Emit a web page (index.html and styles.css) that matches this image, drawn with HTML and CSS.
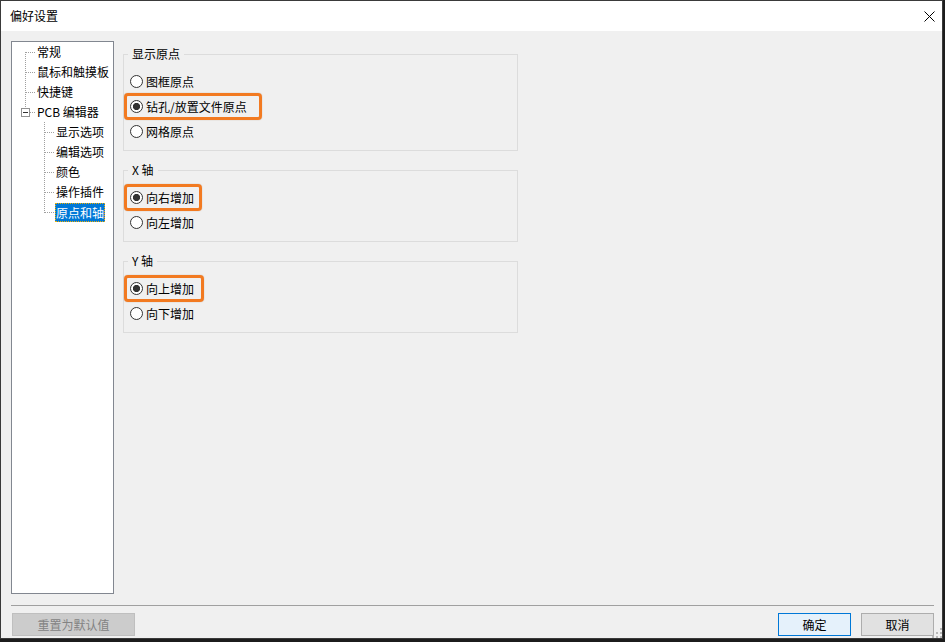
FILE: index.html
```html
<!DOCTYPE html>
<html lang="zh-CN">
<head>
<meta charset="utf-8">
<title>偏好设置</title>
<link rel="stylesheet" href="styles.css">
</head>
<body>
<div class="window">
  <div class="titlebar">
    <span class="title">偏好设置</span>
    <svg class="close" width="11" height="11" viewBox="0 0 11 11"><path d="M0.5 0.5 L10.5 10.5 M10.5 0.5 L0.5 10.5" stroke="#000" stroke-width="1" fill="none"/></svg>
  </div>
  <div class="client">
    <div class="main">
      <div class="tree">
        <svg class="tree-lines" width="100" height="200" viewBox="0 0 100 200">
          <g stroke="#a0a0a0" stroke-width="1" stroke-dasharray="1 1" fill="none">
            <line x1="13.5" y1="10" x2="13.5" y2="66"/>
            <line x1="14" y1="10.5" x2="23" y2="10.5"/>
            <line x1="14" y1="30.5" x2="23" y2="30.5"/>
            <line x1="14" y1="50.5" x2="23" y2="50.5"/>
            <line x1="18" y1="70.5" x2="23" y2="70.5"/>
            <line x1="32.5" y1="80" x2="32.5" y2="171"/>
            <line x1="33" y1="90.5" x2="42" y2="90.5"/>
            <line x1="33" y1="110.5" x2="42" y2="110.5"/>
            <line x1="33" y1="130.5" x2="42" y2="130.5"/>
            <line x1="33" y1="150.5" x2="42" y2="150.5"/>
            <line x1="33" y1="170.5" x2="42" y2="170.5"/>
          </g>
          <rect x="9.5" y="66.5" width="8" height="8" fill="#fff" stroke="#919191"/>
          <line x1="11" y1="70.5" x2="16" y2="70.5" stroke="#333" stroke-width="1"/>
        </svg>
        <div class="node root">常规</div>
        <div class="node root">鼠标和触摸板</div>
        <div class="node root">快捷键</div>
        <div class="node root">PCB 编辑器</div>
        <div class="node child">显示选项</div>
        <div class="node child">编辑选项</div>
        <div class="node child">颜色</div>
        <div class="node child">操作插件</div>
        <div class="node child"><span class="selected">原点和轴</span></div>
      </div>
      <div class="panel">
        <fieldset class="group">
          <legend>显示原点</legend>
          <div class="opt"><span class="radio"></span><span>图框原点</span></div>
          <div class="opt"><span class="hl hl-origin"><span class="radio checked"></span><span>钻孔/放置文件原点</span></span></div>
          <div class="opt"><span class="radio"></span><span>网格原点</span></div>
        </fieldset>
        <fieldset class="group">
          <legend>X 轴</legend>
          <div class="opt"><span class="hl hl-x"><span class="radio checked"></span><span>向右增加</span></span></div>
          <div class="opt"><span class="radio"></span><span>向左增加</span></div>
        </fieldset>
        <fieldset class="group">
          <legend>Y 轴</legend>
          <div class="opt"><span class="hl hl-y"><span class="radio checked"></span><span>向上增加</span></span></div>
          <div class="opt"><span class="radio"></span><span>向下增加</span></div>
        </fieldset>
      </div>
    </div>
    <div class="separator"></div>
    <div class="buttons">
      <button class="btn btn-disabled" disabled>重置为默认值</button>
      <div class="spacer"></div>
      <button class="btn btn-default">确定</button>
      <button class="btn">取消</button>
    </div>
    <svg class="grip" width="10" height="10" viewBox="0 0 10 10">
      <g fill="#b8b8b8">
        <rect x="8" y="0" width="2" height="2"/>
        <rect x="4" y="4" width="2" height="2"/>
        <rect x="8" y="4" width="2" height="2"/>
        <rect x="0" y="8" width="2" height="2"/>
        <rect x="4" y="8" width="2" height="2"/>
        <rect x="8" y="8" width="2" height="2"/>
      </g>
    </svg>
  </div>
</div>
</body>
</html>
```

FILE: styles.css
```css
* { box-sizing: border-box; }

html, body {
  margin: 0;
  padding: 0;
  background: #1c1c1c;
}

body {
  width: 945px;
  height: 642px;
  overflow: hidden;
  font-family: "Noto Sans CJK SC", "Noto Sans", sans-serif;
  font-size: 12px;
  color: #000;
}

.window {
  width: 943px;
  height: 639px;
  border: 1px solid #3a3a3a;
  background: #f0f0f0;
  display: flex;
  flex-direction: column;
}

.titlebar {
  height: 30px;
  flex: none;
  background: #fff;
  display: flex;
  align-items: center;
  padding-left: 9px;
  padding-right: 7px;
}

.title {
  font-size: 12px;
  line-height: 16px;
  flex: 1;
}

.close {
  display: block;
}

.client {
  flex: 1;
  position: relative;
  display: flex;
  flex-direction: column;
}

.main {
  display: flex;
  padding: 10px 0 0 10px;
  height: 563px;
  flex: none;
}

.tree {
  position: relative;
  width: 103px;
  height: 553px;
  background: #fff;
  border: 1px solid #828790;
  flex: none;
}

.tree-lines {
  position: absolute;
  left: 0;
  top: 0;
}

.node {
  height: 20px;
  line-height: 16px;
  display: flex;
  align-items: center;
  white-space: nowrap;
}

.node.root { padding-left: 25px; }
.node.child { padding-left: 44px; }
.node.child:last-child { padding-left: 43px; }

.selected {
  background: #0078d7;
  color: #fff;
  padding: 1px 1px;
  outline: 1px dotted #f0b000;
  outline-offset: -1px;
  line-height: 17px;
}

.panel {
  margin-left: 9px;
  padding-top: 5px;
  display: flex;
  flex-direction: column;
}

.group {
  width: 395px;
  margin: 0 0 11px 0;
  padding: 7px 0 6px 0;
  border: 1px solid #dcdcdc;
  min-width: 0;
}

.group legend {
  margin-left: 4px;
  padding: 0 4px;
  line-height: 16px;
  font-size: 12px;
}

.opt {
  height: 25px;
  display: flex;
  align-items: center;
  padding-left: 6px;
  line-height: 16px;
  white-space: nowrap;
}

.opt:has(.hl) { padding-left: 0; }

.radio {
  width: 13px;
  height: 13px;
  border: 1px solid #333;
  border-radius: 50%;
  background: #fff;
  margin-right: 3px;
  flex: none;
}

.radio.checked {
  background: radial-gradient(circle at center, #333 0, #333 3.3px, #fff 3.9px);
}

.hl {
  display: flex;
  align-items: center;
  height: 27px;
  border: 3px solid #f27a21;
  border-radius: 4px;
  padding-left: 3px;
  box-shadow: 0 0 1px rgba(120, 60, 10, 0.5);
}

.hl-origin { width: 138px; }
.hl-x { width: 78px; }
.hl-y { width: 80px; }

.separator {
  height: 1px;
  background: #a0a0a0;
  margin: 11px 8px 0 10px;
  flex: none;
}

.buttons {
  display: flex;
  align-items: center;
  margin-top: 7px;
  padding: 0 8px 0 11px;
}

.spacer { flex: 1; }

.btn {
  font-family: "Noto Sans CJK SC", "Noto Sans", sans-serif;
  font-size: 12px;
  line-height: 16px;
  height: 23px;
  width: 73px;
  padding: 0;
  margin: 0;
  border: 1px solid #adadad;
  background: #e1e1e1;
  color: #000;
  border-radius: 0;
}

.btn + .btn { margin-left: 10px; }

.btn-default {
  border-color: #0078d7;
  background: #e5f1fb;
}

.btn-disabled {
  width: 123px;
  background: #cccccc;
  border-color: #bfbfbf;
  color: #838383;
}

.grip {
  position: absolute;
  right: 0;
  bottom: 0;
}
```
